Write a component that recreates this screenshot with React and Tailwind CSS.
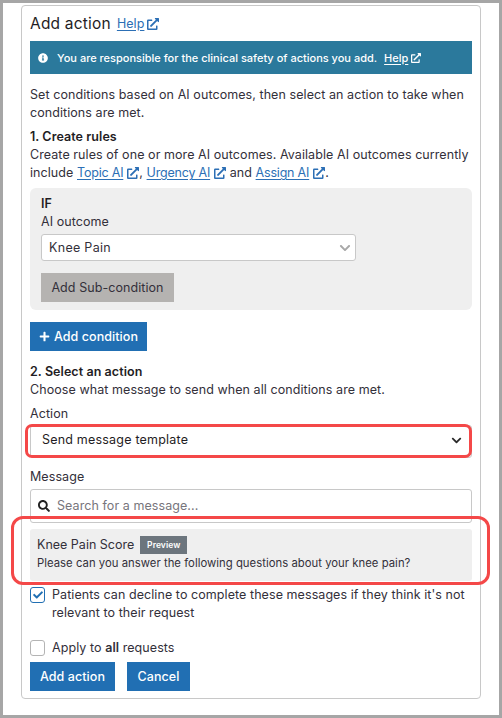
import { FaExternalLinkAlt, FaInfoCircle, FaPlus, FaSearch, FaChevronDown, FaCheck } from "react-icons/fa";

function HelpLink({ children, white, size = 12, tight }) {
  return (
    <span className={`inline-flex items-center align-baseline ${tight ? "gap-[4px] tracking-[-0.2px]" : "gap-[3px]"} ${white ? "text-white" : "text-[#2c6fb5]"}`}>
      <a className="underline underline-offset-2">{children}</a>
      <FaExternalLinkAlt size={size} />
    </span>
  );
}

export default function App() {
  return (
    <div className="w-[502px] h-[718px] bg-white border-[3px] border-[#a6a6a6] font-['Inter',sans-serif] text-[12.5px] leading-[18px] tracking-[0.07px] text-[#33303a] pt-[2px] px-[18px] overflow-hidden">
      <div className="relative w-[460px] h-[694px] border border-[#c8c8c8] rounded-[4px] px-[8px] pt-[6px]">
        {/* Header */}
        <div className="flex items-center gap-[6px] h-[24px]">
          <h2 className="text-[15.5px] font-normal text-[#1f1d24] tracking-[0.2px]">Add action</h2>
          <HelpLink size={12}>Help</HelpLink>
        </div>

        {/* Banner */}
        <div className="flex items-center h-[33px] mt-[5px] bg-[#2b799c] text-white text-[11px] tracking-normal font-medium pl-[8px] gap-[9px]">
          <FaInfoCircle size={10} />
          <span className="mr-[-2px]">You are responsible for the clinical safety of actions you add.</span>
          <HelpLink white size={10}>Help</HelpLink>
        </div>

        <p className="mt-[12px]">Set conditions based on AI outcomes, then select an action to take when conditions are met.</p>
        <h3 className="mt-[6px] font-semibold text-[#1f1d24]">1. Create rules</h3>
        <p>
          Create rules of one or more AI outcomes. Available AI outcomes currently include{" "}
          <HelpLink tight>Topic AI</HelpLink>, <HelpLink tight>Urgency AI</HelpLink> and <HelpLink tight>Assign AI</HelpLink>.
        </p>

        {/* Condition box */}
        <div className="mt-[6px] h-[122px] bg-[#efefef] rounded-[6px] pl-[11px] pt-[7px]">
          <div className="font-semibold text-[#1f1d24]">IF</div>
          <div>AI outcome</div>
          <div className="flex items-center justify-between w-[315px] h-[27px] mt-[3px] bg-white border border-[#c8c8c8] rounded-[3px] pl-[7px] pr-[4px]">
            <span className="tracking-[0.3px]">Knee Pain</span>
            <FaChevronDown size={12} className="text-[#a8a8a8]" />
          </div>
          <button className="block w-[133px] h-[29px] mt-[12px] bg-[#b5b3b1] text-[#33303a] text-[12.5px] text-center">Add Sub-condition</button>
        </div>

        <button className="flex items-center justify-center gap-[4px] w-[117px] h-[29px] mt-[12px] bg-[#216fb3] text-white font-medium">
          <FaPlus size={11} />
          Add condition
        </button>

        <h3 className="mt-[12px] font-semibold text-[#1f1d24]">2. Select an action</h3>
        <p>Choose what message to send when all conditions are met.</p>
        <label className="block mt-[6px]">Action</label>

        {/* Action select with red highlight */}
        <div className="relative flex items-center justify-between h-[33px] mt-[2px] pb-[3px] border border-[#c8c8c8] rounded-[3px] pl-[11px] pr-[9px]">
          <span className="tracking-[0.2px] text-[#1f1d24]">Send message template</span>
          <FaChevronDown size={11} className="text-[#2a2a2a]" />
          <div className="absolute left-[-6px] right-[-1px] top-[-2px] bottom-[-1px] border-[3px] border-[#f44848] rounded-[7px]" />
        </div>

        <label className="block mt-[10px]">Message</label>
        <div className="flex items-center h-[34px] mt-[3px] border border-[#c8c8c8] rounded-[3px] pl-[7px] gap-[7px] bg-white">
          <FaSearch size={12} className="text-[#222]" />
          <span className="text-[#77757c]">Search for a message...</span>
        </div>

        {/* Selected message with red highlight */}
        <div className="relative mt-[6px] h-[52px] bg-[#efefef] rounded-[3px] pl-[7px] pt-[7px]">
          <div className="flex items-center gap-[6px] h-[18px]">
            <span className="tracking-normal">Knee Pain Score</span>
            <span className="flex items-center justify-center w-[47px] h-[18px] bg-[#6c757d] text-white text-[8.5px] font-semibold">Preview</span>
          </div>
          <p className="text-[11.3px] leading-[18px] tracking-[0.03px]">Please can you answer the following questions about your knee pain?</p>
          <div className="absolute left-[-19px] right-[-18px] top-[-13px] bottom-[-4px] border-[3px] border-[#f44848] rounded-[12px]" />
        </div>

        <label className="flex gap-[7px] mt-[5px]">
          <span className="flex items-center justify-center shrink-0 w-[15px] h-[16px] mt-[1px] border border-[#216fb3] rounded-[3px] text-[#216fb3]">
            <FaCheck size={10} />
          </span>
          <span>Patients can decline to complete these messages if they think it's not relevant to their request</span>
        </label>

        <label className="flex items-center gap-[7px] mt-[17px]">
          <span className="shrink-0 w-[15px] h-[16px] border border-[#b4b4b4] rounded-[3px]" />
          <span>Apply to <b className="font-semibold">all</b> requests</span>
        </label>

        <div className="flex gap-[12px] mt-[5px]">
          <button className="w-[85px] h-[29px] bg-[#216fb3] text-white font-medium">Add action</button>
          <button className="w-[63px] h-[29px] bg-[#216fb3] text-white font-medium">Cancel</button>
        </div>
      </div>
    </div>
  );
}
